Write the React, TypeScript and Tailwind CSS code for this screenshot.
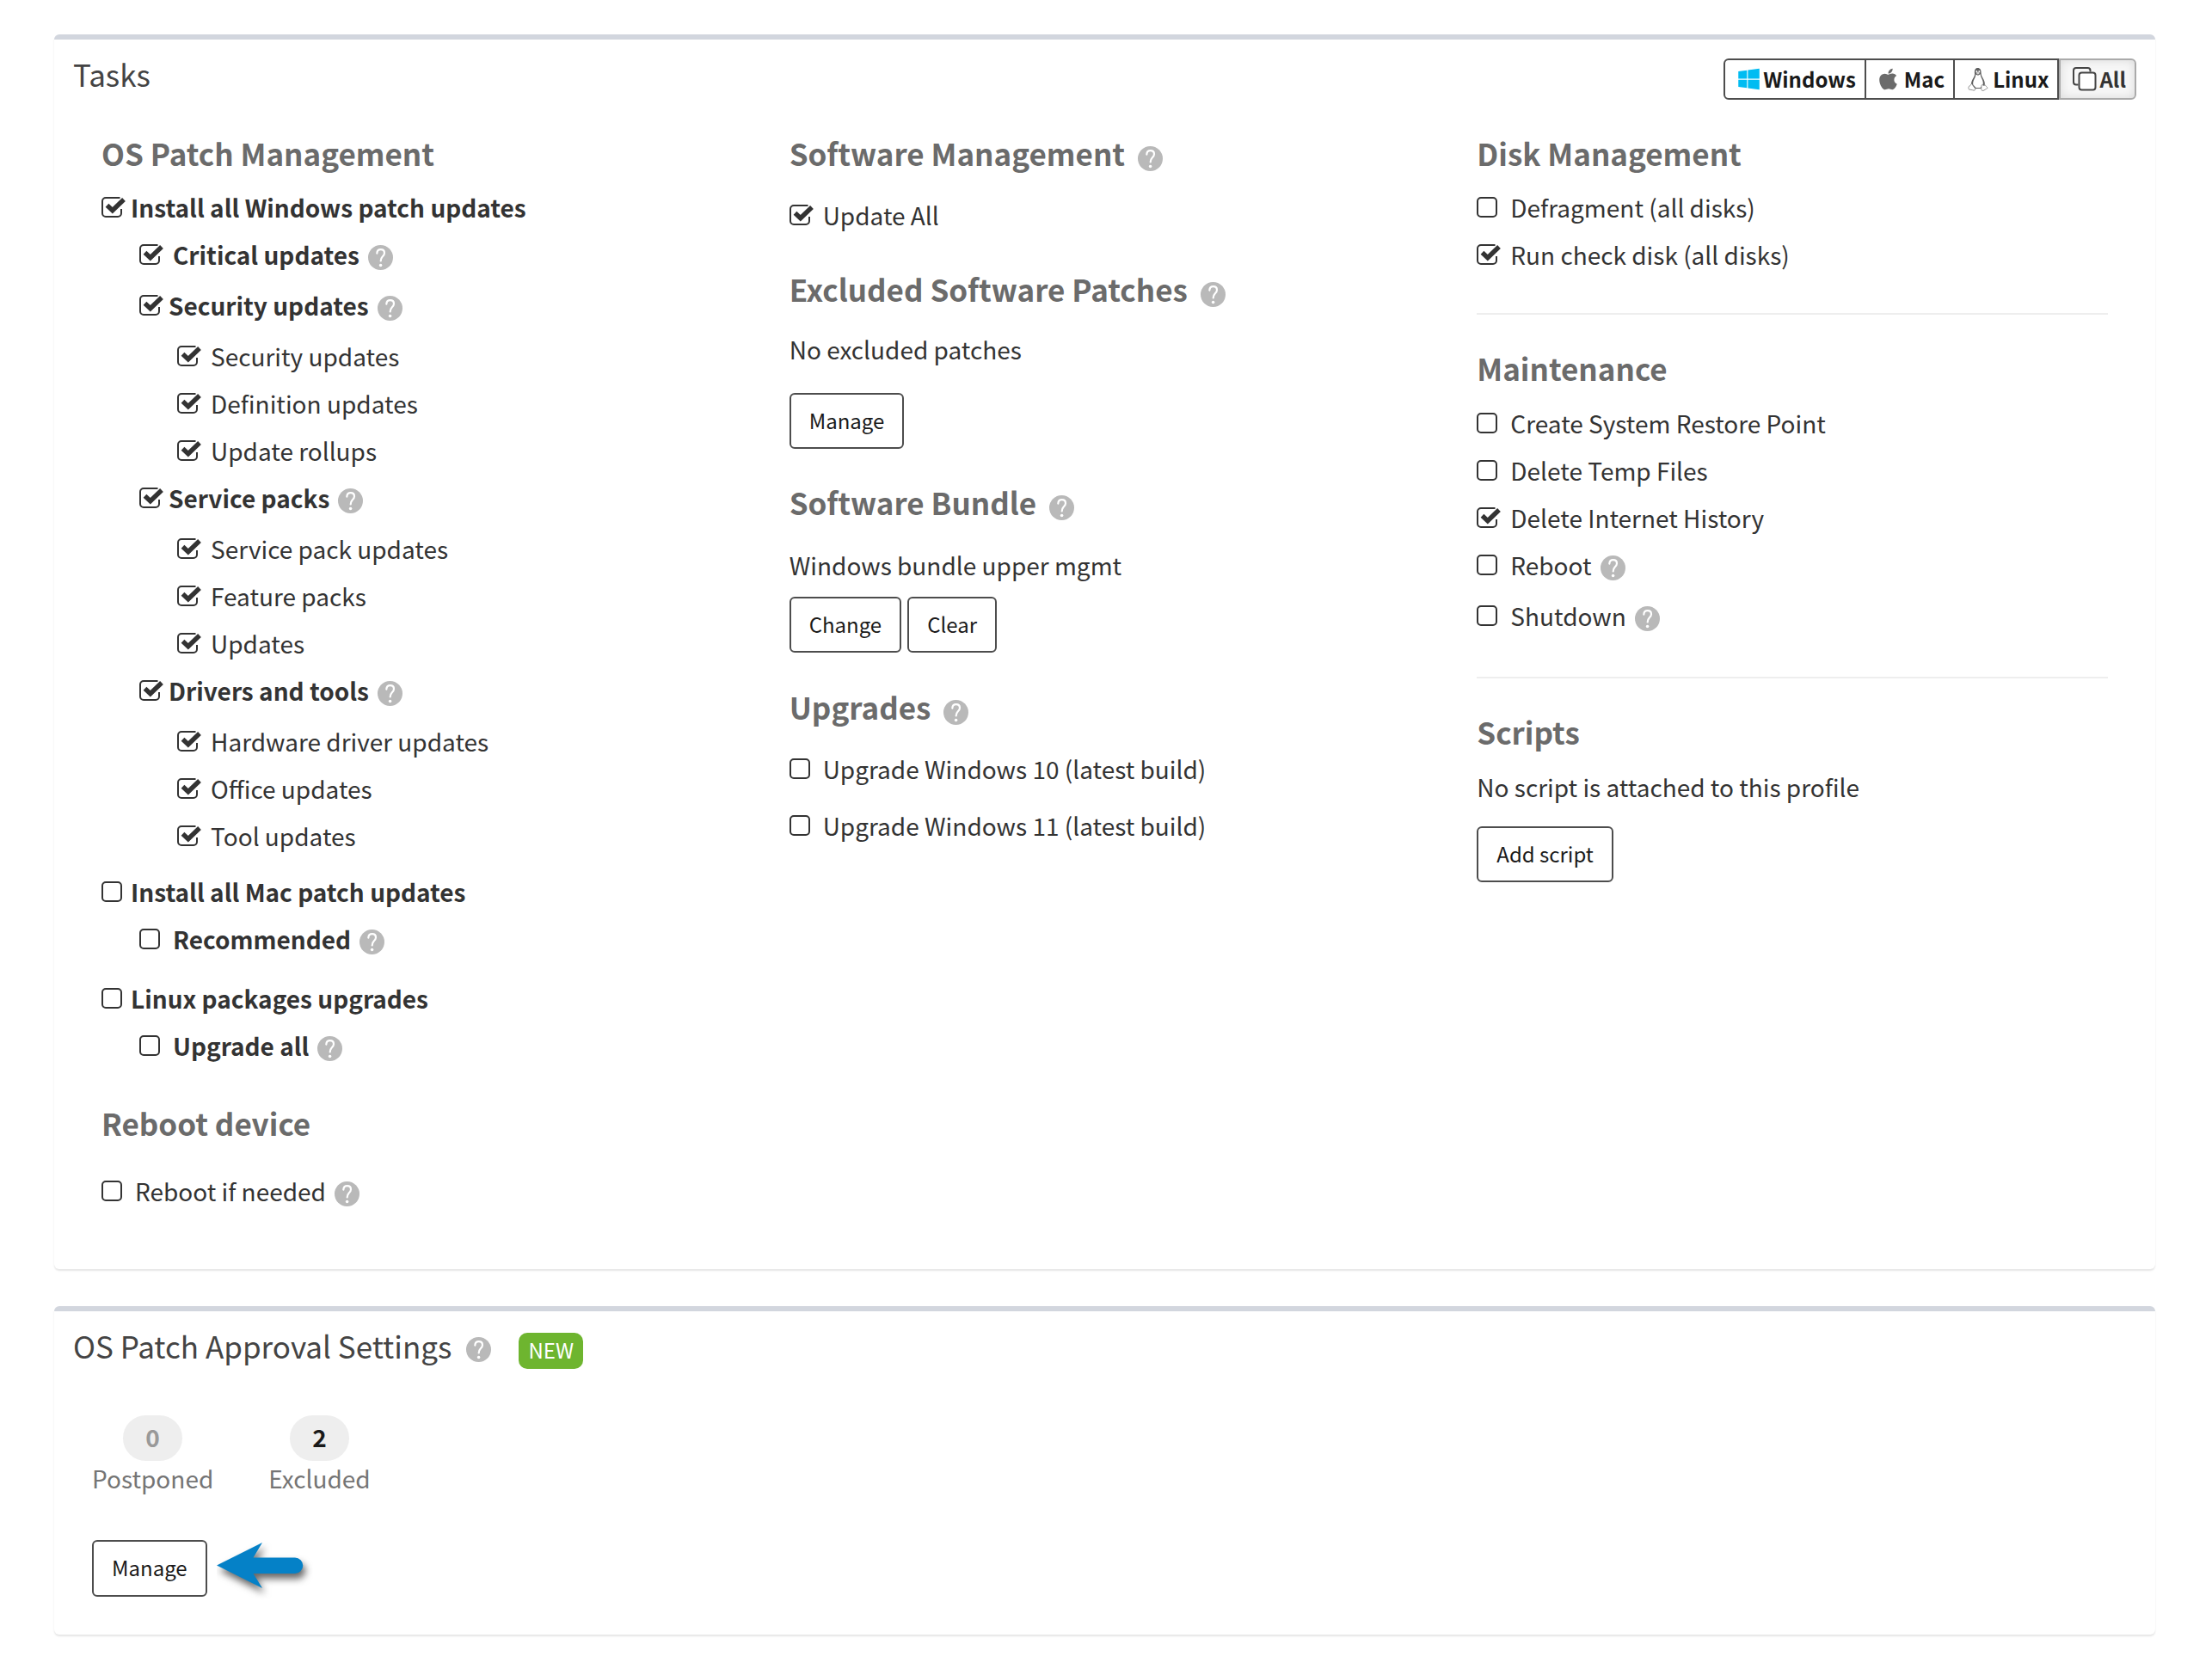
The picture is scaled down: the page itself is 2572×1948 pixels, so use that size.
import React, { useState } from "react";
import { FaApple, FaWindows } from "react-icons/fa";

type Task = {
  id: string;
  label: string;
  level?: number;
  bold?: boolean;
  tight?: boolean;
  help?: boolean;
  gapBefore?: boolean;
};

const osPatchTasks: Task[] = [
  { id: "win-all", label: "Install all Windows patch updates", bold: true, tight: true },
  { id: "critical", label: "Critical updates", level: 1, bold: true, help: true },
  { id: "security", label: "Security updates", level: 1, bold: true, tight: true, help: true },
  { id: "security-sub", label: "Security updates", level: 2 },
  { id: "definition", label: "Definition updates", level: 2 },
  { id: "rollups", label: "Update rollups", level: 2 },
  { id: "service-packs", label: "Service packs", level: 1, bold: true, tight: true, help: true },
  { id: "service-pack-updates", label: "Service pack updates", level: 2 },
  { id: "feature-packs", label: "Feature packs", level: 2 },
  { id: "updates", label: "Updates", level: 2 },
  { id: "drivers", label: "Drivers and tools", level: 1, bold: true, tight: true, help: true },
  { id: "hardware", label: "Hardware driver updates", level: 2 },
  { id: "office", label: "Office updates", level: 2 },
  { id: "tool", label: "Tool updates", level: 2 },
  { id: "mac-all", label: "Install all Mac patch updates", bold: true, tight: true, gapBefore: true },
  { id: "recommended", label: "Recommended", level: 1, bold: true, help: true },
  { id: "linux-all", label: "Linux packages upgrades", bold: true, tight: true, gapBefore: true },
  { id: "linux-upgrade", label: "Upgrade all", level: 1, bold: true, help: true },
];

const diskTasks: Task[] = [
  { id: "defragment", label: "Defragment (all disks)" },
  { id: "check-disk", label: "Run check disk (all disks)" },
];

const maintenanceTasks: Task[] = [
  { id: "restore-point", label: "Create System Restore Point" },
  { id: "temp-files", label: "Delete Temp Files" },
  { id: "internet-history", label: "Delete Internet History" },
  { id: "reboot", label: "Reboot", help: true },
  { id: "shutdown", label: "Shutdown", help: true },
];

const initialChecked = [
  "win-all",
  "critical",
  "security",
  "security-sub",
  "definition",
  "rollups",
  "service-packs",
  "service-pack-updates",
  "feature-packs",
  "updates",
  "drivers",
  "hardware",
  "office",
  "tool",
  "update-all",
  "check-disk",
  "internet-history",
];

const indents = ["", "pl-11", "pl-[88px]"];

const HelpIcon = ({ className = "" }: { className?: string }) => (
  <svg
    viewBox="0 0 29 29"
    className={`size-[29px] shrink-0 ${className}`}
    role="img"
    aria-label="Help"
  >
    <circle cx="14.5" cy="14.5" r="14.5" fill="#b9b9b9" />
    <path
      d="M10.3 9.6C10.5 6.7 12.3 5.2 14.7 5.2C17.3 5.2 19 6.8 19 9.2C19 11.2 17.9 12.3 16.7 13.5C15.4 14.8 14.7 15.9 14.7 18.5"
      fill="none"
      stroke="#fff"
      strokeWidth="2.2"
      strokeLinecap="round"
    />
    <circle cx="14.6" cy="23.5" r="1.8" fill="#fff" />
  </svg>
);

const LinuxIcon = () => (
  <svg viewBox="0 0 24 28" className="mr-[5px] h-7 w-6">
    <path
      d="M8 8C7.6 3 8.8 1 11.5 1C14.5 1 15.7 3.2 15.6 7C15.6 10 17 11.5 18.5 14.5C19.8 17 20.2 19.5 19.5 22L15 25H8.5L4 21.5C3.6 18.5 4.7 15.5 6 13.5C7.3 11.5 8.1 10 8 8Z"
      fill="#5f5f5f"
    />
    <path
      d="M9.3 8.5L12 9.8L14.6 8.3C14.9 11 16 12.5 17 15C18 17.5 18 19.5 17.3 21.5L14.5 24H9.5L6.3 20.5C5.8 18 6.7 15.6 7.7 13.7C8.6 12 9.3 10.5 9.3 8.5Z"
      fill="#fff"
    />
    <path d="M9.3 6.8L11.8 5.5L14.3 6.7L11.9 8.7Z" fill="#d0d0d0" />
    <circle cx="10.3" cy="4.9" r="1" fill="#fff" />
    <circle cx="13.3" cy="4.9" r="1" fill="#fff" />
    <path
      d="M4.6 19.5L8.8 25.2C9 27 7.5 27.6 5.8 26.8L1.6 26C0.5 25.5 1 24.5 1 23.5C0.9 22 2.3 22.2 3 21.5C3.5 20.9 3.6 19.5 4.6 19.5Z"
      fill="#fff"
      stroke="#777"
      strokeWidth="0.8"
    />
    <path
      d="M16 21.5C16.3 20.2 17.2 20.7 18.2 21.3C19.5 21.8 20.2 20.5 20.8 21.5C21.2 22.7 22.8 23.3 23 24.2C23 25.2 20.5 25.6 19 27C17.5 28 15.7 27.3 15.7 25.5Z"
      fill="#fff"
      stroke="#777"
      strokeWidth="0.8"
    />
  </svg>
);

const AllIcon = () => (
  <svg viewBox="0 0 28 28" className="mr-[3px] size-7" fill="none" stroke="#444" strokeWidth="2">
    <path d="M6.5 20.5H4A3 3 0 0 1 1 17.5V4A3 3 0 0 1 4 1H17.5A3 3 0 0 1 20.5 4V5.5" />
    <rect x="7.5" y="6.5" width="19" height="20" rx="3" fill="#fff" />
  </svg>
);

const ArrowLeft = () => (
  <svg viewBox="0 3 112 72" className="ml-[11px] h-[72px] w-[112px]" aria-hidden="true">
    <path
      d="M0 35.5L53 9L42.5 26.5H91A9.2 9.2 0 0 1 91 45H42.5L53 62Z"
      fill="#0581c7"
      className="drop-shadow-[3px_6px_4px_rgba(0,0,0,0.6)]"
    />
  </svg>
);

const Checkbox = ({
  id,
  checked,
  onChange,
}: {
  id: string;
  checked: boolean;
  onChange: () => void;
}) => (
  <span className="grid h-6 w-[29px] shrink-0">
    <input
      type="checkbox"
      id={id}
      checked={checked}
      onChange={onChange}
      className="size-6 appearance-none [grid-area:1/1]"
    />
    <svg
      viewBox="0 0 29 24"
      className="pointer-events-none h-6 w-[29px] [grid-area:1/1]"
      fill="none"
      stroke="#333"
      strokeWidth="2"
    >
      {checked ? (
        <>
          <path d="M21.5 1H5A4 4 0 0 0 1 5V19A4 4 0 0 0 5 23H19A4 4 0 0 0 23 19V14" />
          <path d="M6.5 9.8L12.8 15.8L26 3" strokeWidth="5.4" />
        </>
      ) : (
        <rect x="1" y="1" width="22" height="22" rx="4" />
      )}
    </svg>
  </span>
);

const Heading = ({
  children,
  help,
  className = "",
}: {
  children: React.ReactNode;
  help?: boolean;
  className?: string;
}) => (
  <h3
    className={`flex h-12 items-center text-[35px] leading-[48px] font-bold whitespace-nowrap text-[#6b6b6b] ${className}`}
  >
    {children}
    {help && <HelpIcon className="mt-3 ml-[15px]" />}
  </h3>
);

const Button = ({ children, tall }: { children: React.ReactNode; tall?: boolean }) => (
  <button
    type="button"
    className={`rounded-[6px] border-2 border-[#4d4d4d] bg-white px-[21px] pb-[2px] text-[24px] leading-8 whitespace-nowrap text-[#1a1a1a] ${
      tall ? "h-[66px]" : "h-[65px]"
    }`}
  >
    {children}
  </button>
);

const Count = ({ value, label }: { value: number; label: string }) => (
  <div className="flex flex-col items-center">
    <span
      className={`h-[53px] w-[69px] rounded-full bg-[#eee] text-center leading-[50px] font-bold ${
        value ? "text-[#1a1a1a]" : "text-[#999]"
      }`}
    >
      {value}
    </span>
    <span className="text-[#757575]">{label}</span>
  </div>
);

const osButton =
  "flex h-12 items-center border-y-2 border-r-2 border-[#4d4d4d] text-[24px] leading-8 font-bold text-[#1a1a1a]";

const card =
  "rounded-[6px] border-t-[6px] border-[#d2d6de] bg-white shadow-[0_2px_2px_rgba(0,0,0,0.1)]";

const App = () => {
  const [checked, setChecked] = useState<string[]>(initialChecked);

  const toggle = (id: string) => {
    setChecked(
      checked.includes(id) ? checked.filter((item) => item !== id) : [...checked, id]
    );
  };

  const renderTask = (task: Task) => (
    <div
      key={task.id}
      className={`${indents[task.level || 0]} ${task.help ? "h-[59px]" : "h-[55px]"} ${
        task.gapBefore ? "mt-[10px]" : ""
      }`}
    >
      <div className="flex h-[55px] items-center">
        <Checkbox
          id={task.id}
          checked={checked.includes(task.id)}
          onChange={() => toggle(task.id)}
        />
        <label
          htmlFor={task.id}
          className={`whitespace-nowrap ${task.tight ? "pl-[5px]" : "pl-[10px]"} ${
            task.bold ? "font-bold" : ""
          }`}
        >
          {task.label}
        </label>
        {task.help && <HelpIcon className="mt-2 ml-[10px]" />}
      </div>
    </div>
  );

  return (
    <main className="flex min-h-screen flex-col gap-[43px] bg-white pt-10 pr-[66px] pb-12 pl-[63px] font-['Noto_Sans_CJK_SC',sans-serif] text-[28px] leading-10 text-[#333]">
      <section className={`${card} pb-[60px]`}>
        <header className="flex items-start justify-between px-[22px] pt-4">
          <h2 className="text-[35px] leading-[48px] text-[#444]">Tasks</h2>
          <div className="mt-[6px] flex">
            <button type="button" className={`${osButton} rounded-l-[6px] border-l-2 pr-[10px] pl-[15px]`}>
              <FaWindows className="mr-1 h-7 w-[25px] text-[#00bcf2]" />
              Windows
            </button>
            <button type="button" className={`${osButton} pr-[10px] pl-[15px]`}>
              <FaApple className="mr-2 h-7 w-[21px] text-[#6b6b6b]" />
              Mac
            </button>
            <button type="button" className={`${osButton} border-r-0 pr-[10px] pl-[15px]`}>
              <LinuxIcon />
              Linux
            </button>
            <button
              type="button"
              className="flex h-12 items-center rounded-r-[6px] border-2 border-[#aaa] bg-[#f7f7f7] pr-[10px] pl-[14px] text-[24px] leading-8 font-bold text-[#333] shadow-[inset_0_0_12px_rgba(0,0,0,0.12)]"
            >
              <AllIcon />
              All
            </button>
          </div>
        </header>

        <div className="grid grid-cols-3 gap-[66px] px-[55px] pt-[38px]">
          <div>
            <Heading className="mb-[11px]">OS Patch Management</Heading>
            {osPatchTasks.map(renderTask)}
            <Heading className="mt-[35px] mb-[27px]">Reboot device</Heading>
            {renderTask({ id: "reboot-if-needed", label: "Reboot if needed", help: true })}
          </div>

          <div>
            <Heading help className="mb-5">
              Software Management
            </Heading>
            {renderTask({ id: "update-all", label: "Update All" })}
            <Heading help className="mt-[35px]">
              Excluded Software Patches
            </Heading>
            <p className="mt-[26px]">No excluded patches</p>
            <div className="mt-[31px] flex">
              <Button>Manage</Button>
            </div>
            <Heading help className="mt-[38px]">
              Software Bundle
            </Heading>
            <p className="mt-[29px]">Windows bundle upper mgmt</p>
            <div className="mt-[17px] flex gap-[7px]">
              <Button>Change</Button>
              <Button>Clear</Button>
            </div>
            <Heading help className="mt-[39px] mb-5">
              Upgrades
            </Heading>
            <div className="flex flex-col gap-[11px]">
              {renderTask({ id: "win10", label: "Upgrade Windows 10 (latest build)" })}
              {renderTask({ id: "win11", label: "Upgrade Windows 11 (latest build)" })}
            </div>
          </div>

          <div>
            <Heading className="mb-[11px]">Disk Management</Heading>
            {diskTasks.map(renderTask)}
            <hr className="mt-[41px] mb-[38px] border-t-2 border-[#eee]" />
            <Heading className="mb-3">Maintenance</Heading>
            {maintenanceTasks.map(renderTask)}
            <hr className="mt-10 mb-[38px] border-t-2 border-[#eee]" />
            <Heading>Scripts</Heading>
            <p className="mt-5">No script is attached to this profile</p>
            <div className="mt-[26px] flex">
              <Button>Add script</Button>
            </div>
          </div>
        </div>
      </section>

      <section className={`${card} pb-[44px]`}>
        <header className="flex items-center px-[22px] pt-4">
          <h2 className="text-[35px] leading-[48px] text-[#444]">OS Patch Approval Settings</h2>
          <HelpIcon className="mt-2 ml-[17px]" />
          <span className="mt-[6px] -mb-[6px] ml-8 h-[42px] rounded-[10px] bg-[#6eb52f] px-[11px] text-[24px] leading-10 text-white">
            NEW
          </span>
        </header>
        <div className="px-11 pt-[57px]">
          <div className="flex gap-16">
            <Count value={0} label="Postponed" />
            <Count value={2} label="Excluded" />
          </div>
          <div className="mt-[52px] flex h-[66px] items-center">
            <Button tall>Manage</Button>
            <ArrowLeft />
          </div>
        </div>
      </section>
    </main>
  );
};

export default App;
